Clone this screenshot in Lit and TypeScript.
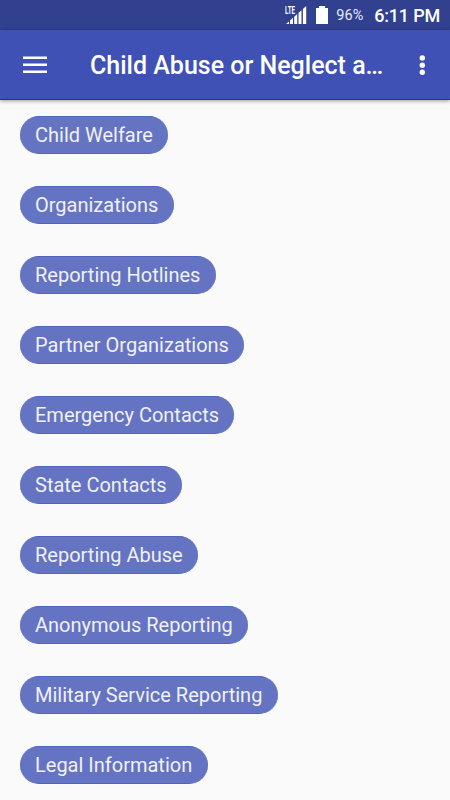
import { LitElement, html, css } from "lit";
import { customElement } from "lit/decorators.js";

const TOPICS = [
  "Child Welfare",
  "Organizations",
  "Reporting Hotlines",
  "Partner Organizations",
  "Emergency Contacts",
  "State Contacts",
  "Reporting Abuse",
  "Anonymous Reporting",
  "Military Service Reporting",
  "Legal Information",
];

@customElement("app-root")
export class AppRoot extends LitElement {
  static styles = css`
    :host { display: flex; flex-direction: column; height: 800px; width: 450px; overflow: hidden; background: #fafafa; font-family: Roboto, sans-serif; }
    * { box-sizing: border-box; }
    .status { height: 30px; flex: none; background: #324090; color: #fff; display: flex; align-items: center; justify-content: flex-end; padding-right: 10px; }
    .signal { width: 24px; height: 20px; margin-right: 7px; }
    .signal text { font: 700 10.5px Roboto, sans-serif; }
    .battery { width: 12px; height: 18px; margin-right: 8px; }
    .percent { font-size: 14.5px; margin-right: 11px; line-height: 30px; padding-top: 2px; color: #e8eaf6; }
    .clock { font-size: 18px; font-weight: 500; line-height: 30px; padding-top: 2px; letter-spacing: -0.2px; }
    .bar { height: 70px; flex: none; background: #3f51b5; color: #fff; display: flex; align-items: center; padding: 0 25px 0 23px; border-bottom: 1px solid #1a35a5; box-shadow: 0 1px 4px rgba(0,0,0,.4); }
    .menu { width: 24px; height: 17px; margin-right: 43px; }
    .title { font-size: 25px; font-weight: 500; margin: 0; padding-top: 3px; flex: 1; line-height: 30px; white-space: nowrap; }
    .more { width: 6px; height: 20px; }
    .list { list-style: none; margin: 0; padding: 16px 20px 0; display: flex; flex-direction: column; align-items: flex-start; gap: 32px; }
    .chip { height: 38px; flex: none; line-height: 36px; border: solid #5066c0; border-width: 1px 0; border-radius: 19px; padding: 0 15.3px 0 15px; background: #6573c3; color: #f0f1fa; font-size: 20px; white-space: nowrap; }
  `;

  render() {
    return html`
      <div class="status">
        <svg class="signal" viewBox="0 0 24 20" fill="#fff">
          <text x="0" y="9" textLength="10" lengthAdjust="spacingAndGlyphs">LTE</text>
          <path d="M1 19l3-2.6V19zM5 15.500l3-2.700V19H5zM9.200 11.800l3-2.700V19h-3zM13.500 8l3-2.700V19h-3zM17.900 4l3.300-3V19h-3.300z" />
        </svg>
        <svg class="battery" viewBox="0 0 12 18" fill="#fff"><path d="M3 0h6v2h3v16H0V2h3z" /></svg>
        <span class="percent">96%</span>
        <span class="clock">6:11 PM</span>
      </div>
      <header class="bar">
        <svg class="menu" viewBox="0 0 24 17" fill="#fff"><path d="M0 .5h24V3H0zM0 7.500h24v2.500H0zM0 14.400h24v2.500H0z" /></svg>
        <h1 class="title">Child Abuse or Neglect a…</h1>
        <svg class="more" viewBox="0 0 6 20" fill="#fff"><circle cx="3.300" cy="2.900" r="2.700" /><circle cx="3.300" cy="10.200" r="2.700" /><circle cx="3.300" cy="17.300" r="2.700" /></svg>
      </header>
      <ul class="list">${TOPICS.map((t) => html`<li class="chip">${t}</li>`)}</ul>
    `;
  }
}
